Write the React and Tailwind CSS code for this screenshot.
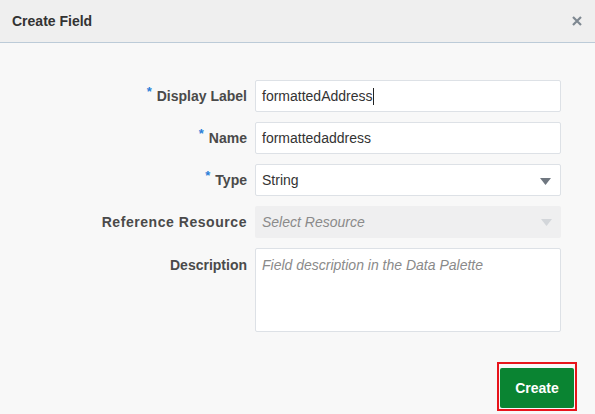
import React from "react";

function Arrow({ muted }) {
  return (
    <svg width="11" height="7" viewBox="0 0 11 7" className="absolute right-[9px] top-[13px]">
      <path d="M0 0 L11 0 L5.5 7 Z" fill={muted ? "#d3d6da" : "#6f7780"} />
    </svg>
  );
}

function Row({ label, required, children, top, wide }) {
  return (
    <div className={`flex gap-2 ${top ? "items-start" : "items-center"}`}>
      <div className={`w-[247px] text-right text-[14px] font-bold text-[#4a4a4a] ${top ? "pt-[7px]" : ""} ${wide ? "tracking-[0.55px]" : ""}`}>
        {required && <span className="text-[#2b7fd8] text-[13px] relative -top-[5px] mr-[5px]">*</span>}
        {label}
      </div>
      {children}
    </div>
  );
}

export default function App() {
  return (
    <div className="w-[595px] h-[414px] bg-[#f8f8f8] flex flex-col" style={{ fontFamily: '"Liberation Sans", Arial, sans-serif' }}>
      <div className="h-[43px] bg-[#efefef] border-b border-[#bccbd8] flex items-center justify-between pl-3 pr-[13px] shrink-0">
        <span className="text-[14px] font-bold text-[#333]">Create Field</span>
        <svg width="10" height="10" viewBox="0 0 10 10">
          <path d="M1 1 L9 9 M9 1 L1 9" stroke="#7e8891" strokeWidth="2.2" />
        </svg>
      </div>
      <div className="flex flex-col gap-[10px] pt-[37px]">
        <Row label="Display Label" required>
          <div className="w-[306px] h-[32px] bg-white border border-[#dde1e6] rounded-[2px] flex items-center px-[6px] text-[14px] text-[#333]">
            formattedAddress<span className="inline-block w-px h-[17px] bg-[#222]" />
          </div>
        </Row>
        <Row label="Name" required>
          <div className="w-[306px] h-[32px] bg-white border border-[#dde1e6] rounded-[2px] flex items-center px-[6px] text-[14px] text-[#333]">
            formattedaddress
          </div>
        </Row>
        <Row label="Type" required>
          <div className="relative w-[306px] h-[32px] bg-white border border-[#dde1e6] rounded-[2px] flex items-center px-[6px] text-[14px] text-[#333]">
            String
            <Arrow />
          </div>
        </Row>
        <Row label="Reference Resource" wide>
          <div className="relative w-[306px] h-[32px] bg-[#efeff0] rounded-[2px] flex items-center px-[7px] text-[14px] italic text-[#8a8a8a]">
            Select Resource
            <Arrow muted />
          </div>
        </Row>
        <Row label="Description" top>
          <div className="w-[306px] h-[84px] bg-white border border-[#dde1e6] rounded-[2px] px-[6px] pt-[8px] text-[14px] leading-[16px] italic text-[#8a8a8a]">
            Field description in the Data Palette
          </div>
        </Row>
      </div>
      <div className="flex justify-end pr-[18px] pt-[30px]">
        <div className="border-2 border-[#e8141b] pt-[4px] px-[1px] pb-[1px]">
          <button className="w-[74px] h-[40px] bg-[#0a8432] rounded-[2px] text-white text-[14px] font-bold">Create</button>
        </div>
      </div>
    </div>
  );
}
